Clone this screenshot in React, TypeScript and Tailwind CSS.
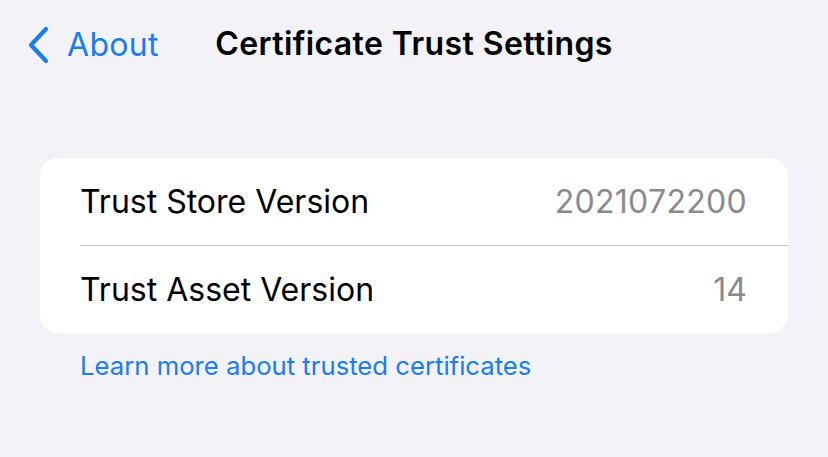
import React from "react";

export default function App() {
  return (
    <div
      className="w-[828px] h-[457px] bg-[#f2f2f7] overflow-hidden"
      style={{ fontFamily: "Inter, 'Noto Sans', sans-serif" }}
    >
      <div className="relative h-[90px] flex items-center justify-center">
        <div className="absolute left-[27px] top-[26px] flex items-center">
          <svg width="22" height="38" viewBox="0 0 22 38" className="mr-[18px]">
            <path
              d="M19 3 L4 19 L19 35"
              fill="none"
              stroke="#1a7cf2"
              strokeWidth="4.2"
              strokeLinecap="round"
              strokeLinejoin="round"
            />
          </svg>
          <span className="text-[32px] leading-none text-[#1a7cf2] tracking-[0.3px]">About</span>
        </div>
        <div className="text-[32px] font-semibold text-black tracking-[0.4px] mt-[-2px]">
          Certificate Trust Settings
        </div>
      </div>
      <div className="mt-[68px] mx-[40px] bg-white rounded-[18px] overflow-hidden">
        <div className="h-[87px] flex items-center justify-between pl-[40px] pr-[41px]">
          <span className="text-[32px] text-black">Trust Store Version</span>
          <span className="text-[32px] text-[#8a8a8e] tracking-[0.3px]">2021072200</span>
        </div>
        <div className="ml-[40px] h-px bg-[#c6c6c8]" />
        <div className="h-[87px] flex items-center justify-between pl-[40px] pr-[41px]">
          <span className="text-[32px] text-black">Trust Asset Version</span>
          <span className="text-[32px] text-[#8a8a8e]">14</span>
        </div>
      </div>
      <div className="mt-[17px] pl-[80px] text-[25.7px] text-[#1a7cf2] leading-[32px]">
        Learn more about trusted certificates
      </div>
    </div>
  );
}
